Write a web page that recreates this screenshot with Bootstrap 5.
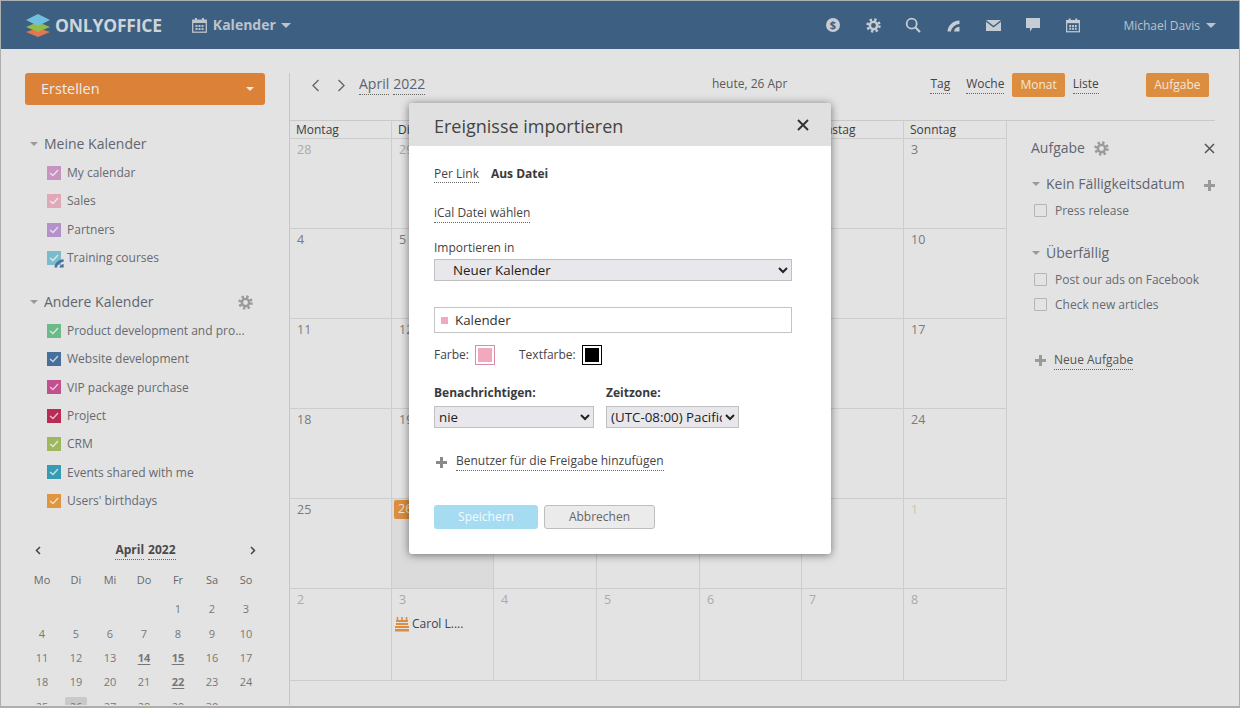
<!DOCTYPE html>
<html lang="de">
<head>
<meta charset="utf-8">
<title>Kalender</title>
<link rel="stylesheet" href="https://cdn.jsdelivr.net/npm/bootstrap@5.3.0/dist/css/bootstrap.min.css">
<style>
html,body{height:708px;overflow:hidden}
body{margin:0;background:#e3e3e3;font-family:"Open Sans","Liberation Sans",sans-serif;font-size:12px;color:#666;line-height:1.3}
.frame{position:relative;height:708px;border:1px solid #aeaeae;border-bottom-width:2px;display:flex;flex-direction:column}
.topbar{height:48px;background:#3d5f82;padding:0 23px 0 24px;flex:none;flex-wrap:nowrap;justify-content:flex-start;color:#c6ccd3}
.logo-text{font-size:17.5px;font-weight:700;color:#cfd4da;margin-left:4px;letter-spacing:-.2px}
.cal-ico{margin-left:30px}
.mod-name{font-size:14px;font-weight:700;color:#bcc3cb;margin-left:6px}
.tri{display:inline-block;width:0;height:0;border-left:5px solid transparent;border-right:5px solid transparent;border-top:5px solid currentColor}
.tri-top{color:#bcc3cb;margin-left:6px}
.tri-mod{margin-left:5px}
.top-ico{width:40px;display:flex;justify-content:center;color:#c6ccd3}
.user-name{font-size:12px;color:#bcc3cb;margin-left:30px;padding-top:1px}
.main-area{flex:1;min-height:0;margin-bottom:1px;margin-top:24px;overflow:hidden}
.side{width:288px;flex:none;padding-left:24px;overflow:hidden}
.create-btn{width:240px;height:32px;background:#db8238;border:0;border-radius:3px;color:#ececec;font-size:14.5px;padding:0 11px 0 16px;display:flex;align-items:center;justify-content:space-between}
.create-btn:hover{background:#db8238;color:#ececec}
.tri-sm{border-left-width:4px;border-right-width:4px;border-top-width:4px}
.sec-title{font-size:14px;height:20px;padding-left:5px;gap:6px;color:#5f6670}
.sec-title .tri{color:#9a9a9a;border-left-width:4px;border-right-width:4px;border-top-width:4px}
.sec-first{margin-top:29px}
.sec-second{margin-top:20px;width:240px}
.list-first{margin-top:4.75px}
.list-second{margin-top:4.6px}
.gear-side{margin-right:12px}
.cal-item{height:28.33px;padding-left:22px;gap:6px;font-size:12px;color:#666a70;white-space:nowrap;position:relative}
.swatch{width:14px;height:14px;display:flex;align-items:center;justify-content:center;flex:none;position:relative}
.swatch svg{display:block}
.feed-over{position:absolute;left:7px;top:7px}
.c1{background:#c794c0}.c2{background:#e0a9b8}.c3{background:#b292c9}.c4{background:#7bbccc}.c5{background:#6cba8a}.c6{background:#466f9c}.c7{background:#c0508e}.c8{background:#b92d55}.c9{background:#9fb85f}.c10{background:#369bb3}.c11{background:#e0953f}
.mini-head{width:238px;font-size:12px;font-weight:700;color:#4a4a4a;margin-top:25.75px;padding:0 7px 0 10px;height:20px}
.word-gap{gap:4px}
.dot{border-bottom:1px dotted #666;padding-bottom:1px}
.mini-grid{display:grid;grid-template-columns:repeat(7,34px);grid-template-rows:27px 25px;width:238px;text-align:center;font-size:11px;color:#777;margin-top:9px;grid-auto-rows:24.3px;line-height:24px}
.mini-grid .dow{line-height:20px;color:#686868}
.mini-grid b{text-decoration:underline;text-underline-offset:2px}
.mini-today{background:#c9c9c9;border-radius:2px 2px 0 0;width:22px;margin:2px auto 0;height:22px;line-height:20px}
.content{flex:1;min-width:0;border-left:1px solid #c6c6c6;margin-left:0}
.tool-row{height:47px;padding-bottom:23px;position:relative;align-items:center}
.chev{width:25px;display:flex;justify-content:center;color:#666}
.chev-first{margin-left:13px}
.chev-next{margin-left:1px}
.month-link{font-size:14px;color:#5a6470;margin-left:5px}
.today-lbl{font-size:12px;color:#5a5a5a;position:absolute;left:422px;top:3px}
.view-group{margin-right:30px}
.view-link{font-size:12px;color:#444;margin:0 8px 0 0}
.view-tag{margin-right:16px}
.view-list{margin:0 0 0 8px}
.flat-orange{background:#dc8d3f;color:#f3e6d6;border:0;border-radius:2px;height:24px;font-size:12px;padding:0 8px;line-height:24px}
.flat-orange:hover{background:#dc8d3f;color:#f3e6d6}
.flat-wide{padding:0 8.5px;margin-left:47px}
.body-split{border-top:1px solid #c9c9c9;width:925px;position:relative}
.month-grid{display:grid;grid-template-columns:102px 102px 103px 103px 102px 102px 103px;grid-template-rows:18px repeat(5,90px) 92px;width:717px;flex:none;border-right:1px solid #cdcdcd}
.month-grid>div{border-right:1px solid #cdcdcd;border-bottom:1px solid #cdcdcd;padding:3px 7px 0;font-size:12.5px;color:#7a7a7a}
.month-grid>div:nth-child(7n){border-right:0}
.month-grid>.wk{color:#3c3c3c;padding:1px 6px 0;font-size:12px;line-height:16px}
.month-grid>.off{color:#aaa}
.month-grid>.tan{color:#cfc3ab}
.month-grid>.today-cell{background:#dbdbdb;padding:0 2px}
.today-num{display:inline-block;background:#dc8d3f;color:#f3e6d6;border-radius:2px;padding:1px 4px;width:40px;height:19px;margin-top:1px}
.evt{display:flex;align-items:center;gap:3px;color:#3c4450;margin:8px 0 0 -4px;white-space:nowrap;font-size:12px}
.task-pane{flex:1;padding:17px 0 0 24px;position:relative;color:#666a70}
.pane-title{font-size:14px;color:#5f6670;height:20px;gap:9px}
.pane-x{position:absolute;left:197px;top:22px;line-height:0}
.task-group{font-size:14px;color:#5f6670;height:20px;gap:6px;white-space:nowrap;margin:16px 0 0 1px}
.task-group.next-group{margin-top:20px}
.task-group .tri{color:#9a9a9a;border-left-width:4px;border-right-width:4px;border-top-width:4px}
.task-row{height:25px;gap:8px;font-size:12px;margin-left:3px;white-space:nowrap}
.first-row{margin-top:4px}
.tick{width:13px;height:13px;border:1px solid #b5b5b5;border-radius:1px;flex:none}
.pane-plus{position:absolute;left:197px;top:59px;line-height:0}
.new-task{gap:8px;margin-left:4px;margin-top:35px;font-size:12px;color:#555}
.dialog{position:absolute;left:408px;top:102px;width:422px;height:451px;border:0;border-radius:3px;background:#fff;box-shadow:0 1px 8px rgba(0,0,0,.5);overflow:hidden;display:block;color:#444}
.dialog .modal-header{height:43px;background:#e0e0e0;padding:2px 21px 0 25px;border:0;border-radius:0;color:#444;justify-content:space-between}
.dialog .modal-title{font-size:18px;font-weight:400;color:#444;line-height:1}
.dialog .modal-body{padding:0 25px;font-size:12px;position:static}
.tabs-line{margin-top:20px;height:17px;gap:12px}
.tab-on{color:#3a3a3a}
.dlg-line{margin-top:22px;height:17px}
.dlg-label{margin-top:18px;height:16px}
.imp-select{display:block;width:358px;height:22px;background-color:#e8e8ec;border:1px solid #c0c0c0;border-radius:0;font:13.33px "Open Sans",sans-serif;color:#222;padding:0 0 0 14px;margin-top:3px}
.name-box{width:358px;height:26px;border:1px solid #c4c4c4;margin-top:26px;gap:7px;padding-left:6px;background:#fff}
.pink-dot{width:7px;height:7px;background:#f1a9bc;flex:none}
.name-input{border:0;outline:0;padding:0;background:transparent;font:13.33px "Open Sans",sans-serif;color:#333;width:300px}
.color-line{margin-top:12px;height:20px;gap:6px}
.color-box{width:20px;height:20px;border:1px solid #dc8ea6;padding:2px;display:block;flex:none}
.color-box i{display:block;width:100%;height:100%;background:#f2a8bd}
.color-box.bk{border-color:#000}
.color-box.bk i{background:#000}
.gap-lbl{margin-left:18px}
.sel-pair{margin-top:20px;gap:12px}
.bold-lbl{font-weight:700;color:#3a3a3a;height:16px}
.mini-sel{display:block;height:22px;background-color:#e8e8ec;border:1px solid #c0c0c0;border-radius:0;font:13.33px "Open Sans",sans-serif;color:#222;padding:0;margin-top:5px}
.sel-a{width:160px}
.sel-b{width:133px}
.share-line{margin-top:25px;gap:9px;height:18px;padding-left:2px}
.dlg-btns{margin-top:34px;gap:6px}
.btn-save{width:104px;height:24px;background:#a5dcf2;border:0;border-radius:3px;color:#f2fbff;font-size:12px;padding:0;opacity:1}
.btn-save:hover{background:#a5dcf2;color:#f2fbff}
.btn-cancel{width:111px;height:24px;background:#ebebeb;border:1px solid #bdbdbd;border-radius:3px;color:#666;font-size:12px;padding:0}
.btn-cancel:hover{background:#ebebeb;color:#666;border-color:#bdbdbd}
.dlg-x{position:absolute;left:388px;top:16px;line-height:0}
</style>
</head>
<body>
<div class="frame">
  <nav class="navbar topbar align-items-center">
    <svg width="26" height="24" viewBox="0 0 26 24"><path d="M13 15l12 4-12 5L1 19z" fill="#e2774f"/><path d="M13 9l12 5-12 5L1 14z" fill="#95bb47"/><path d="M13 1l12 6-12 6L1 7z" fill="#6fbfdf"/></svg>
    <span class="logo-text">ONLYOFFICE</span>
    <svg class="cal-ico" width="15" height="15" viewBox="0 0 15 15"><rect x=".7" y="2.2" width="13.6" height="12" fill="none" stroke="#bcc3cb" stroke-width="1.3"/><rect x="1" y="2" width="13" height="3" fill="#bcc3cb"/><rect x="3" y="0" width="2" height="3" fill="#bcc3cb"/><rect x="10" y="0" width="2" height="3" fill="#bcc3cb"/><path d="M3.5 7h2v2h-2zM6.5 7h2v2h-2zM9.5 7h2v2h-2zM3.5 10h2v2h-2zM6.5 10h2v2h-2zM9.5 10h2v2h-2z" fill="#bcc3cb"/></svg>
    <span class="mod-name">Kalender</span>
    <span class="tri tri-top tri-mod"></span>
    <div class="d-flex align-items-center ms-auto">
      <span class="top-ico"><svg width="16" height="16" viewBox="0 0 16 16"><circle cx="8" cy="8" r="7" fill="#c6ccd3"/><text x="8" y="12" text-anchor="middle" font-size="11" font-weight="700" font-family="Open Sans" fill="#3d5f82">$</text></svg></span>
      <span class="top-ico"><svg width="15" height="15" viewBox="0 0 16 16"><circle cx="8" cy="8" r="6.3" fill="none" stroke="#c6ccd3" stroke-width="2.8" stroke-dasharray="2.5 2.45"/><circle cx="8" cy="8" r="3.9" fill="none" stroke="#c6ccd3" stroke-width="2.6"/></svg></span>
      <span class="top-ico"><svg width="16" height="16" viewBox="0 0 16 16"><circle cx="6.7" cy="6.7" r="5" fill="none" stroke="#c6ccd3" stroke-width="1.8"/><path d="M10.5 10.5l4.5 4.5" stroke="#c6ccd3" stroke-width="2.2"/></svg></span>
      <span class="top-ico"><svg width="13" height="13" viewBox="0 0 13 13"><path d="M.5 12.5C1 6.5 5.5 2 12.5 1.5V5C8 5.5 4.5 8.5 4 12.5z" fill="#c6ccd3"/><path d="M7 12.5C7.3 10 9 8.3 12.5 7.8v4.7z" fill="#c6ccd3"/></svg></span>
      <span class="top-ico"><svg width="15" height="11" viewBox="0 0 15 11"><path d="M0 0h15L7.5 5.8z" fill="#c6ccd3"/><path d="M0 1.8l7.5 5.7L15 1.8V11H0z" fill="#c6ccd3"/></svg></span>
      <span class="top-ico"><svg width="14" height="14" viewBox="0 0 14 14"><path d="M0 0h14v10H6.5L4 13.5V10H0z" fill="#c6ccd3"/></svg></span>
      <span class="top-ico"><svg width="14" height="15" viewBox="0 0 15 15"><rect x=".7" y="2.2" width="13.6" height="12" fill="none" stroke="#c6ccd3" stroke-width="1.3"/><rect x="1" y="2" width="13" height="3" fill="#c6ccd3"/><rect x="3" y="0" width="2" height="3" fill="#c6ccd3"/><rect x="10" y="0" width="2" height="3" fill="#c6ccd3"/><path d="M3.5 7h2v2h-2zM6.5 7h2v2h-2zM9.5 7h2v2h-2zM3.5 10h2v2h-2zM6.5 10h2v2h-2zM9.5 10h2v2h-2z" fill="#c6ccd3"/></svg></span>
      <span class="user-name">Michael Davis</span>
      <span class="tri tri-top"></span>
    </div>
  </nav>

  <div class="d-flex main-area">
    <aside class="side">
      <button class="btn create-btn" type="button"><span>Erstellen</span><span class="tri tri-sm"></span></button>
      <div class="sec-title sec-first d-flex align-items-center"><span class="tri"></span><span>Meine Kalender</span></div>
      <div class="list-first">
        <div class="cal-item d-flex align-items-center"><span class="swatch c1"><svg width="10" height="8" viewBox="0 0 10 8"><path d="M1 4l3 2.5L9 1" fill="none" stroke="#fff" stroke-opacity=".7" stroke-width="1.3"/></svg></span><span>My calendar</span></div>
        <div class="cal-item d-flex align-items-center"><span class="swatch c2"><svg width="10" height="8" viewBox="0 0 10 8"><path d="M1 4l3 2.5L9 1" fill="none" stroke="#fff" stroke-opacity=".7" stroke-width="1.3"/></svg></span><span>Sales</span></div>
        <div class="cal-item d-flex align-items-center"><span class="swatch c3"><svg width="10" height="8" viewBox="0 0 10 8"><path d="M1 4l3 2.5L9 1" fill="none" stroke="#fff" stroke-opacity=".7" stroke-width="1.3"/></svg></span><span>Partners</span></div>
        <div class="cal-item d-flex align-items-center"><span class="swatch c4"><svg width="10" height="8" viewBox="0 0 10 8"><path d="M1 4l3 2.5L9 1" fill="none" stroke="#fff" stroke-opacity=".7" stroke-width="1.3"/></svg><svg class="feed-over" width="10" height="10" viewBox="0 0 13 13"><path d="M.5 12.5C1 6.5 5.5 2 12.5 1.5V5C8 5.5 4.5 8.5 4 12.5z" fill="#48729c"/><path d="M7 12.5C7.3 10 9 8.3 12.5 7.8v4.7z" fill="#48729c"/></svg></span><span>Training courses</span></div>
      </div>
      <div class="sec-title sec-second d-flex align-items-center"><span class="tri"></span><span>Andere Kalender</span><svg class="ms-auto gear-side" width="15" height="15" viewBox="0 0 16 16"><circle cx="8" cy="8" r="6.3" fill="none" stroke="#9a9a9a" stroke-width="2.8" stroke-dasharray="2.5 2.45"/><circle cx="8" cy="8" r="3.9" fill="none" stroke="#9a9a9a" stroke-width="2.6"/></svg></div>
      <div class="list-second">
        <div class="cal-item d-flex align-items-center"><span class="swatch c5"><svg width="10" height="8" viewBox="0 0 10 8"><path d="M1 4l3 2.5L9 1" fill="none" stroke="#fff" stroke-opacity=".7" stroke-width="1.3"/></svg></span><span>Product development and pro...</span></div>
        <div class="cal-item d-flex align-items-center"><span class="swatch c6"><svg width="10" height="8" viewBox="0 0 10 8"><path d="M1 4l3 2.5L9 1" fill="none" stroke="#fff" stroke-opacity=".7" stroke-width="1.3"/></svg></span><span>Website development</span></div>
        <div class="cal-item d-flex align-items-center"><span class="swatch c7"><svg width="10" height="8" viewBox="0 0 10 8"><path d="M1 4l3 2.5L9 1" fill="none" stroke="#fff" stroke-opacity=".7" stroke-width="1.3"/></svg></span><span>VIP package purchase</span></div>
        <div class="cal-item d-flex align-items-center"><span class="swatch c8"><svg width="10" height="8" viewBox="0 0 10 8"><path d="M1 4l3 2.5L9 1" fill="none" stroke="#fff" stroke-opacity=".7" stroke-width="1.3"/></svg></span><span>Project</span></div>
        <div class="cal-item d-flex align-items-center"><span class="swatch c9"><svg width="10" height="8" viewBox="0 0 10 8"><path d="M1 4l3 2.5L9 1" fill="none" stroke="#fff" stroke-opacity=".7" stroke-width="1.3"/></svg></span><span>CRM</span></div>
        <div class="cal-item d-flex align-items-center"><span class="swatch c10"><svg width="10" height="8" viewBox="0 0 10 8"><path d="M1 4l3 2.5L9 1" fill="none" stroke="#fff" stroke-opacity=".7" stroke-width="1.3"/></svg></span><span>Events shared with me</span></div>
        <div class="cal-item d-flex align-items-center"><span class="swatch c11"><svg width="10" height="8" viewBox="0 0 10 8"><path d="M1 4l3 2.5L9 1" fill="none" stroke="#fff" stroke-opacity=".7" stroke-width="1.3"/></svg></span><span>Users' birthdays</span></div>
      </div>
      <div class="mini-head d-flex align-items-center justify-content-between">
        <svg width="6" height="9" viewBox="0 0 6 9"><path d="M5 1L1.5 4.5 5 8" fill="none" stroke="#444" stroke-width="1.5"/></svg>
        <span class="d-flex word-gap"><span class="dot">April</span><span class="dot">2022</span></span>
        <svg width="6" height="9" viewBox="0 0 6 9"><path d="M1 1l3.5 3.5L1 8" fill="none" stroke="#444" stroke-width="1.5"/></svg>
      </div>
      <div class="mini-grid">
        <span class="dow">Mo</span><span class="dow">Di</span><span class="dow">Mi</span><span class="dow">Do</span><span class="dow">Fr</span><span class="dow">Sa</span><span class="dow">So</span>
        <span></span><span></span><span></span><span></span><span>1</span><span>2</span><span>3</span>
        <span>4</span><span>5</span><span>6</span><span>7</span><span>8</span><span>9</span><span>10</span>
        <span>11</span><span>12</span><span>13</span><b>14</b><b>15</b><span>16</span><span>17</span>
        <span>18</span><span>19</span><span>20</span><span>21</span><b>22</b><span>23</span><span>24</span>
        <span>25</span><span><span class="mini-today d-block">26</span></span><span>27</span><span>28</span><span>29</span><span>30</span><span></span>
      </div>
    </aside>

    <section class="content">
      <div class="tool-row d-flex">
        <span class="chev chev-first"><svg width="9" height="13" viewBox="0 0 9 13"><path d="M7.5 1L2 6.5 7.5 12" fill="none" stroke="#666" stroke-width="1.4"/></svg></span>
        <span class="chev chev-next"><svg width="9" height="13" viewBox="0 0 9 13"><path d="M1.5 1L7 6.5 1.5 12" fill="none" stroke="#666" stroke-width="1.4"/></svg></span>
        <span class="month-link d-flex word-gap"><span class="dot">April</span><span class="dot">2022</span></span>
        <span class="today-lbl">heute, 26 Apr</span>
        <span class="d-flex align-items-center ms-auto view-group">
          <span class="view-link view-tag dot">Tag</span>
          <span class="view-link dot">Woche</span>
          <button class="btn flat-orange" type="button">Monat</button>
          <span class="view-link view-list dot">Liste</span>
          <button class="btn flat-orange flat-wide" type="button">Aufgabe</button>
        </span>
      </div>
      <div class="body-split d-flex">
        <div class="month-grid">
          <div class="wk">Montag</div><div class="wk">Dienstag</div><div class="wk">Mittwoch</div><div class="wk">Donnerstag</div><div class="wk">Freitag</div><div class="wk">Samstag</div><div class="wk">Sonntag</div>
          <div class="off">28</div><div class="off">29</div><div class="off">30</div><div class="off">31</div><div>1</div><div>2</div><div>3</div>
          <div>4</div><div>5</div><div>6</div><div>7</div><div>8</div><div>9</div><div>10</div>
          <div>11</div><div>12</div><div>13</div><div>14</div><div>15</div><div>16</div><div>17</div>
          <div>18</div><div>19</div><div>20</div><div>21</div><div>22</div><div>23</div><div>24</div>
          <div>25</div><div class="today-cell"><span class="today-num">26</span></div><div>27</div><div>28</div><div>29</div><div>30</div><div class="tan">1</div>
          <div class="off">2</div><div class="off">3<div class="evt"><svg width="14" height="15" viewBox="0 0 14 15"><path d="M2.5 0v4M7 0v4M11.5 0v4" stroke="#dc8d3f" stroke-width="1.6"/><g fill="#dc8d3f"><rect x="1" y="3" width="12" height="2"/><rect x="1" y="6" width="12" height="2"/><rect y="9" width="14" height="2"/><rect y="12" width="14" height="2.5"/></g></svg><span>Carol L....</span></div></div><div class="off">4</div><div class="off">5</div><div class="off">6</div><div class="off">7</div><div class="off">8</div>
        </div>
        <div class="task-pane">
          <div class="pane-title d-flex align-items-center"><span>Aufgabe</span><svg width="15" height="15" viewBox="0 0 16 16"><circle cx="8" cy="8" r="6.3" fill="none" stroke="#9a9a9a" stroke-width="2.8" stroke-dasharray="2.5 2.45"/><circle cx="8" cy="8" r="3.9" fill="none" stroke="#9a9a9a" stroke-width="2.6"/></svg></div>
          <span class="pane-x"><svg width="11" height="11" viewBox="0 0 11 11"><path d="M1 1l9 9M10 1l-9 9" stroke="#555" stroke-width="1.5"/></svg></span>
          <div class="task-group d-flex align-items-center"><span class="tri"></span><span>Kein Fälligkeitsdatum</span></div>
          <span class="pane-plus"><svg width="11" height="11" viewBox="0 0 11 11"><path d="M0 5.5h11M5.5 0v11" stroke="#9a9a9a" stroke-width="3"/></svg></span>
          <div class="task-row first-row d-flex align-items-center"><span class="tick"></span><span>Press release</span></div>
          <div class="task-group next-group d-flex align-items-center"><span class="tri"></span><span>Überfällig</span></div>
          <div class="task-row first-row d-flex align-items-center"><span class="tick"></span><span>Post our ads on Facebook</span></div>
          <div class="task-row d-flex align-items-center"><span class="tick"></span><span>Check new articles</span></div>
          <div class="new-task d-flex align-items-center"><svg width="11" height="11" viewBox="0 0 11 11"><path d="M0 5.5h11M5.5 0v11" stroke="#9a9a9a" stroke-width="3"/></svg><span class="dot">Neue Aufgabe</span></div>
        </div>
      </div>
    </section>
  </div>

  <div class="modal-content dialog" role="dialog" aria-label="Ereignisse importieren">
    <div class="modal-header">
      <h5 class="modal-title">Ereignisse importieren</h5>
    </div>
    <span class="dlg-x"><svg width="12" height="12" viewBox="0 0 12 12"><path d="M1 1l10 10M11 1L1 11" stroke="#333" stroke-width="2"/></svg></span>
    <div class="modal-body">
      <div class="tabs-line d-flex"><span class="dot">Per Link</span><b class="tab-on">Aus Datei</b></div>
      <div class="dlg-line"><span class="dot">iCal Datei wählen</span></div>
      <div class="dlg-label">Importieren in</div>
      <select class="imp-select"><option>Neuer Kalender</option></select>
      <div class="name-box d-flex align-items-center"><span class="pink-dot"></span><input class="name-input" type="text" value="Kalender" aria-label="Name"></div>
      <div class="color-line d-flex align-items-center"><span>Farbe:</span><span class="color-box"><i></i></span><span class="gap-lbl">Textfarbe:</span><span class="color-box bk"><i></i></span></div>
      <div class="d-flex sel-pair">
        <div class="sel-a"><div class="bold-lbl">Benachrichtigen:</div><select class="mini-sel sel-a"><option>nie</option></select></div>
        <div><div class="bold-lbl">Zeitzone:</div><select class="mini-sel sel-b"><option>(UTC-08:00) Pacific Time</option></select></div>
      </div>
      <div class="share-line d-flex align-items-center"><svg width="11" height="11" viewBox="0 0 11 11"><path d="M0 5.5h11M5.5 0v11" stroke="#8a8a8a" stroke-width="3"/></svg><span class="dot">Benutzer für die Freigabe hinzufügen</span></div>
      <div class="dlg-btns d-flex">
        <button class="btn btn-save" type="button">Speichern</button>
        <button class="btn btn-cancel" type="button">Abbrechen</button>
      </div>
    </div>
  </div>
</div>
<script src="https://cdn.jsdelivr.net/npm/bootstrap@5.3.0/dist/js/bootstrap.bundle.min.js"></script>
</body>
</html>
